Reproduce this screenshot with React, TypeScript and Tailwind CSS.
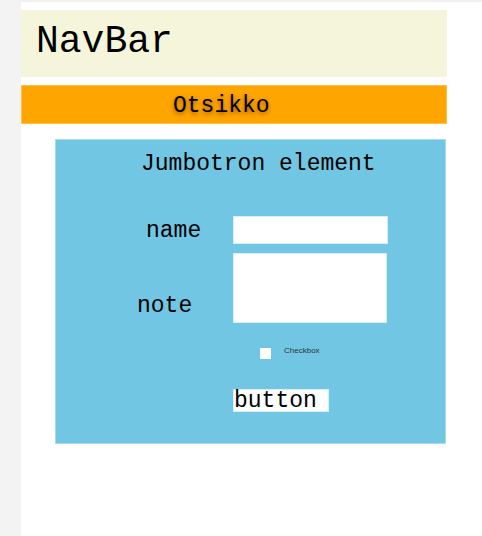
import { useState } from 'react'

const mono = "font-['Liberation_Mono','Courier_New',monospace]"

export default function App() {
  const [name, setName] = useState('')
  const [note, setNote] = useState('')
  const [checked, setChecked] = useState(false)

  return (
    <div className="flex min-h-[536px] w-[482px] bg-white">
      {/* vasen harmaa palkki */}
      <div className="w-[21px] shrink-0 bg-[#f3f3f3]" />

      <div className="flex flex-1 flex-col">
        <div className="h-[2px] bg-[#f1f1f1]" />

        {/* NavBar */}
        <div className="mt-[8px] h-[67px] w-[426px] bg-[#f5f5dc] pl-[15px] pt-[10px]">
          <span className={`${mono} block text-[38px] leading-[43px] text-black`}>NavBar</span>
        </div>

        {/* Otsikko */}
        <div className="mt-[8px] h-[39px] w-[426px] border border-[#ffc04a] bg-[#ffa500] pl-[151px] pt-[7px]">
          <h1
            className={`${mono} text-[23px] leading-[26px] text-black [text-shadow:0_2px_4px_rgba(90,40,0,0.6)]`}
          >
            Otsikko
          </h1>
        </div>

        {/* Jumbotron */}
        <div className="ml-[34px] mt-[15px] h-[305px] w-[391px] border border-[#a6dbeb] bg-[#71c7e3] pt-[11px]">
          <h2 className={`${mono} pl-[85px] text-[23px] leading-[26px] text-black`}>Jumbotron element</h2>

          <div className="mt-[39px] flex items-center">
            <label className={`${mono} w-[177px] pl-[90px] pt-[2px] text-[23px] leading-[26px] text-black`}>name</label>
            <input
              value={name}
              onChange={e => setName(e.target.value)}
              className="h-[28px] w-[155px] border border-[#d6eef6] bg-white outline-none"
            />
          </div>

          <div className="mt-[9px] flex items-end">
            <label className={`${mono} mb-[4px] w-[177px] pl-[81px] text-[23px] leading-[26px] text-black`}>note</label>
            <textarea
              value={note}
              onChange={e => setNote(e.target.value)}
              className="h-[70px] w-[154px] resize-none border border-[#d6eef6] bg-white outline-none"
            />
          </div>

          <div className="ml-[204px] mt-[25px] flex items-center gap-[13px]">
            <input
              type="checkbox"
              checked={checked}
              onChange={() => setChecked(c => !c)}
              className="h-[11px] w-[11px] appearance-none bg-white"
            />
            <span className="-mt-[5px] font-['Liberation_Sans',Arial,sans-serif] text-[8px] leading-[10px] text-[#333]">
              Checkbox
            </span>
          </div>

          <div className="ml-[177px] mt-[30px]">
            <button
              type="button"
              className={`${mono} h-[23px] border border-[#d6eef6] bg-white pr-[11px] pt-[1px] text-left text-[23px] leading-[21px] text-black`}
            >
              button
            </button>
          </div>
        </div>
      </div>
    </div>
  )
}
